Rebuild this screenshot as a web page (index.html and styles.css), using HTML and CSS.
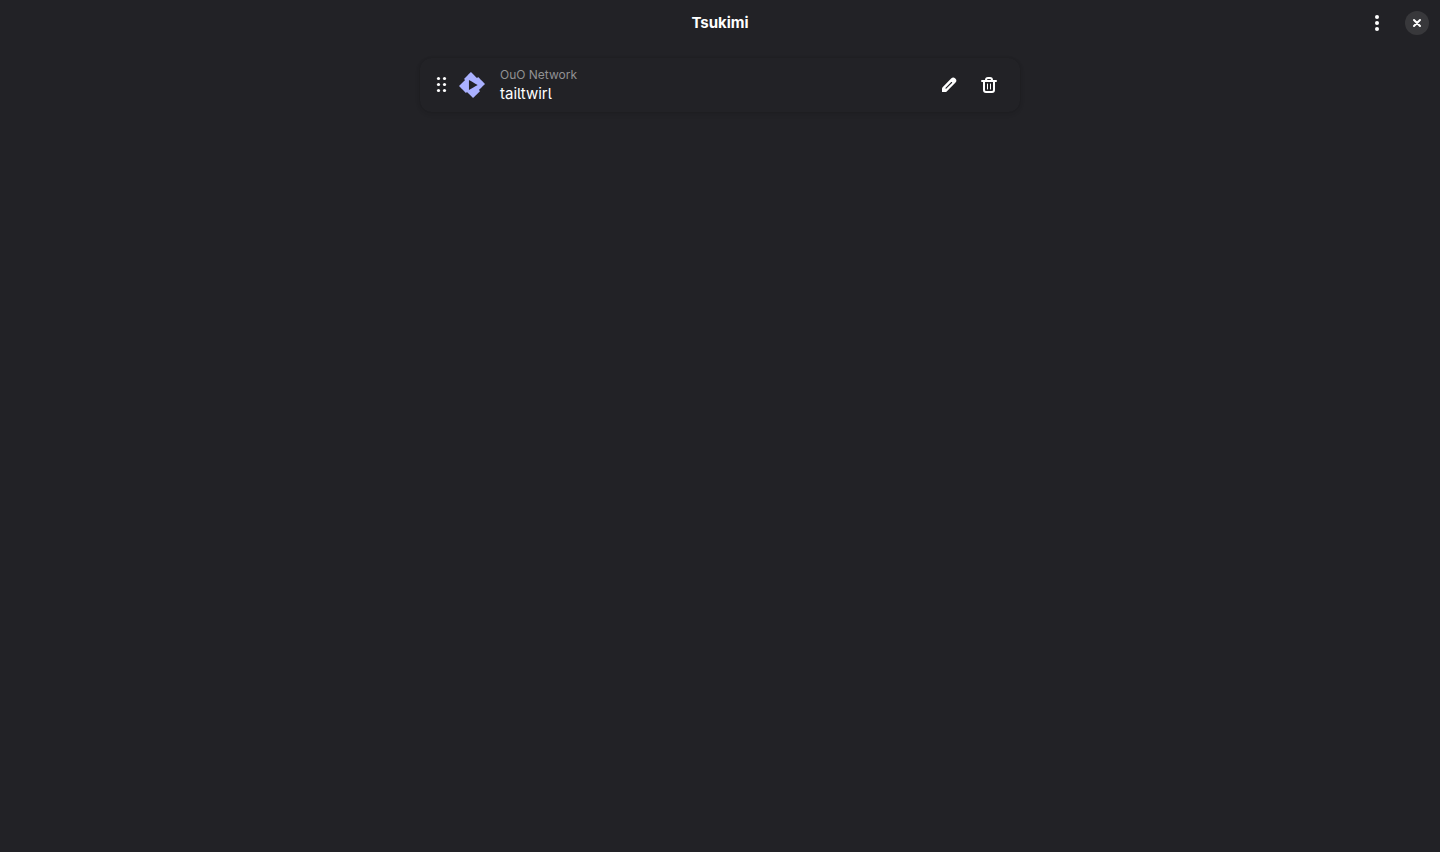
FILE: index.html
```html
<!DOCTYPE html>
<html lang="en">
<head>
<meta charset="utf-8">
<meta name="viewport" content="width=device-width, initial-scale=1">
<title>Tsukimi</title>
<link rel="stylesheet" href="styles.css">
</head>
<body>
<header class="headerbar">
  <h1 class="title">Tsukimi</h1>
  <div class="window-controls">
    <button class="icon-button" type="button" aria-label="Main menu">
      <svg width="16" height="16" viewBox="0 0 16 16" fill="currentColor"><circle cx="8" cy="2" r="2"/><circle cx="8" cy="8" r="2"/><circle cx="8" cy="14" r="2"/></svg>
    </button>
    <button class="close-button" type="button" aria-label="Close">
      <svg width="16" height="16" viewBox="0 0 16 16" fill="none" stroke="currentColor" stroke-width="2" stroke-linecap="round"><path d="M5 5l6 6M11 5l-6 6"/></svg>
    </button>
  </div>
</header>
<main class="content">
  <ul class="server-list">
    <li class="server-row">
      <svg class="drag-handle" width="10" height="16" viewBox="0 0 10 16" fill="currentColor" aria-hidden="true"><circle cx="2.5" cy="1.5" r="1.6"/><circle cx="8.5" cy="1.5" r="1.6"/><circle cx="2.5" cy="7.5" r="1.6"/><circle cx="8.5" cy="7.5" r="1.6"/><circle cx="2.5" cy="13.5" r="1.6"/><circle cx="8.5" cy="13.5" r="1.6"/></svg>
      <svg class="server-logo" width="26" height="26" viewBox="0 0 24 24" fill="currentColor" aria-hidden="true"><path d="M11.041 0c-.007 0-1.456 1.43-3.219 3.176L4.615 6.352l.512.513.512.512-2.819 2.791L0 12.961l1.83 1.848c1.006 1.016 2.438 2.46 3.182 3.209l1.351 1.359.508-.496c.28-.273.515-.498.524-.498.008 0 1.266 1.264 2.794 2.808L12.97 24l.187-.182c.23-.225 5.007-4.95 5.717-5.656l.52-.516-.502-.513c-.276-.282-.5-.52-.496-.53.003-.009 1.264-1.26 2.802-2.783 1.538-1.522 2.8-2.776 2.803-2.785.005-.012-3.617-3.684-6.107-6.193L17.65 4.6l-.505.505c-.279.278-.517.501-.53.497-.013-.005-1.27-1.267-2.793-2.805A449.655 449.655 0 0 0 11.041 0zM9.223 7.367c.091.038 7.951 4.608 7.957 4.627.003.013-1.781 1.056-3.965 2.32a999.898 999.898 0 0 1-3.996 2.307c-.019.006-.026-1.266-.026-4.629 0-3.7.007-4.634.03-4.625Z"/></svg>
      <div class="server-text">
        <span class="server-name">OuO Network</span>
        <span class="server-user">tailtwirl</span>
      </div>
      <div class="row-actions">
        <button class="icon-button" type="button" aria-label="Edit server">
          <svg width="16" height="16" viewBox="0 0 16 16" fill="currentColor"><path fill-rule="evenodd" d="M10.1 1.6a2.9 2.9 0 0 1 4.2 0a2.9 2.9 0 0 1 0 4.2L5.7 14.4Q5.1 15 4.3 15H1v-3.3q0-.8.6-1.4zM10.2 5.1L4.6 10.7a.5.5 0 0 0 .8.8L11 5.9a.55.55 0 0 0-.8-.8z"/></svg>
        </button>
        <button class="icon-button" type="button" aria-label="Remove server">
          <svg width="16" height="16" viewBox="0 0 16 16" fill="none" stroke="currentColor"><path stroke-width="2" stroke-linecap="round" d="M1 4h14"/><path stroke-width="2" d="M5 4V3q0-2 2-2h2q2 0 2 2v1M3 4v9q0 2 2 2h6q2 0 2-2V4"/><path stroke-width="1" stroke-linecap="round" d="M6.5 7v5M9.5 7v5"/></svg>
        </button>
      </div>
    </li>
  </ul>
</main>
</body>
</html>
```
FILE: styles.css
```css
* {
  box-sizing: border-box;
}

body {
  margin: 0;
  min-height: 100vh;
  background: #222226;
  color: #fff;
  font: 15px/20px Inter, "Noto Sans", sans-serif;
  font-feature-settings: "cv05";
}

svg {
  display: block;
  flex: none;
}

.headerbar {
  display: grid;
  grid-template-columns: 1fr auto 1fr;
  align-items: center;
  min-height: 46px;
  padding: 0 6px;
}

.title {
  grid-column: 2;
  margin: 0;
  font-size: 15px;
  font-weight: 650;
}

.window-controls {
  display: flex;
  justify-content: flex-end;
  align-items: center;
  gap: 11px;
  padding-right: 5px;
}

.icon-button,
.close-button {
  display: grid;
  place-items: center;
  padding: 0;
  border: 0;
  color: inherit;
  background: transparent;
}

.icon-button {
  width: 34px;
  height: 34px;
  border-radius: 9px;
}

.close-button {
  width: 24px;
  height: 24px;
  border-radius: 50%;
  background: #38383b;
}

.icon-button:hover {
  background: #323236;
}

.content {
  padding: 12px;
}

.server-list {
  max-width: 600px;
  margin: 0 auto;
  padding: 0;
  list-style: none;
}

.server-row {
  display: flex;
  align-items: center;
  min-height: 54px;
  padding: 0 14px 0 16px;
  border-radius: 12px;
  box-shadow: 0 0 0 1px rgb(0 0 6 / 3%), 0 1px 3px 1px rgb(0 0 6 / 5%), 0 2px 6px 2px rgb(0 0 6 / 2%);
}

.drag-handle {
  overflow: visible;
}

.server-logo {
  margin-left: 13px;
  color: #aab1ff;
}

.server-text {
  display: flex;
  flex: 1;
  flex-direction: column;
  margin-left: 15px;
}

.server-name {
  color: #919193;
  font-size: 12px;
  line-height: 18px;
}

.row-actions {
  display: flex;
  gap: 6px;
}
```
